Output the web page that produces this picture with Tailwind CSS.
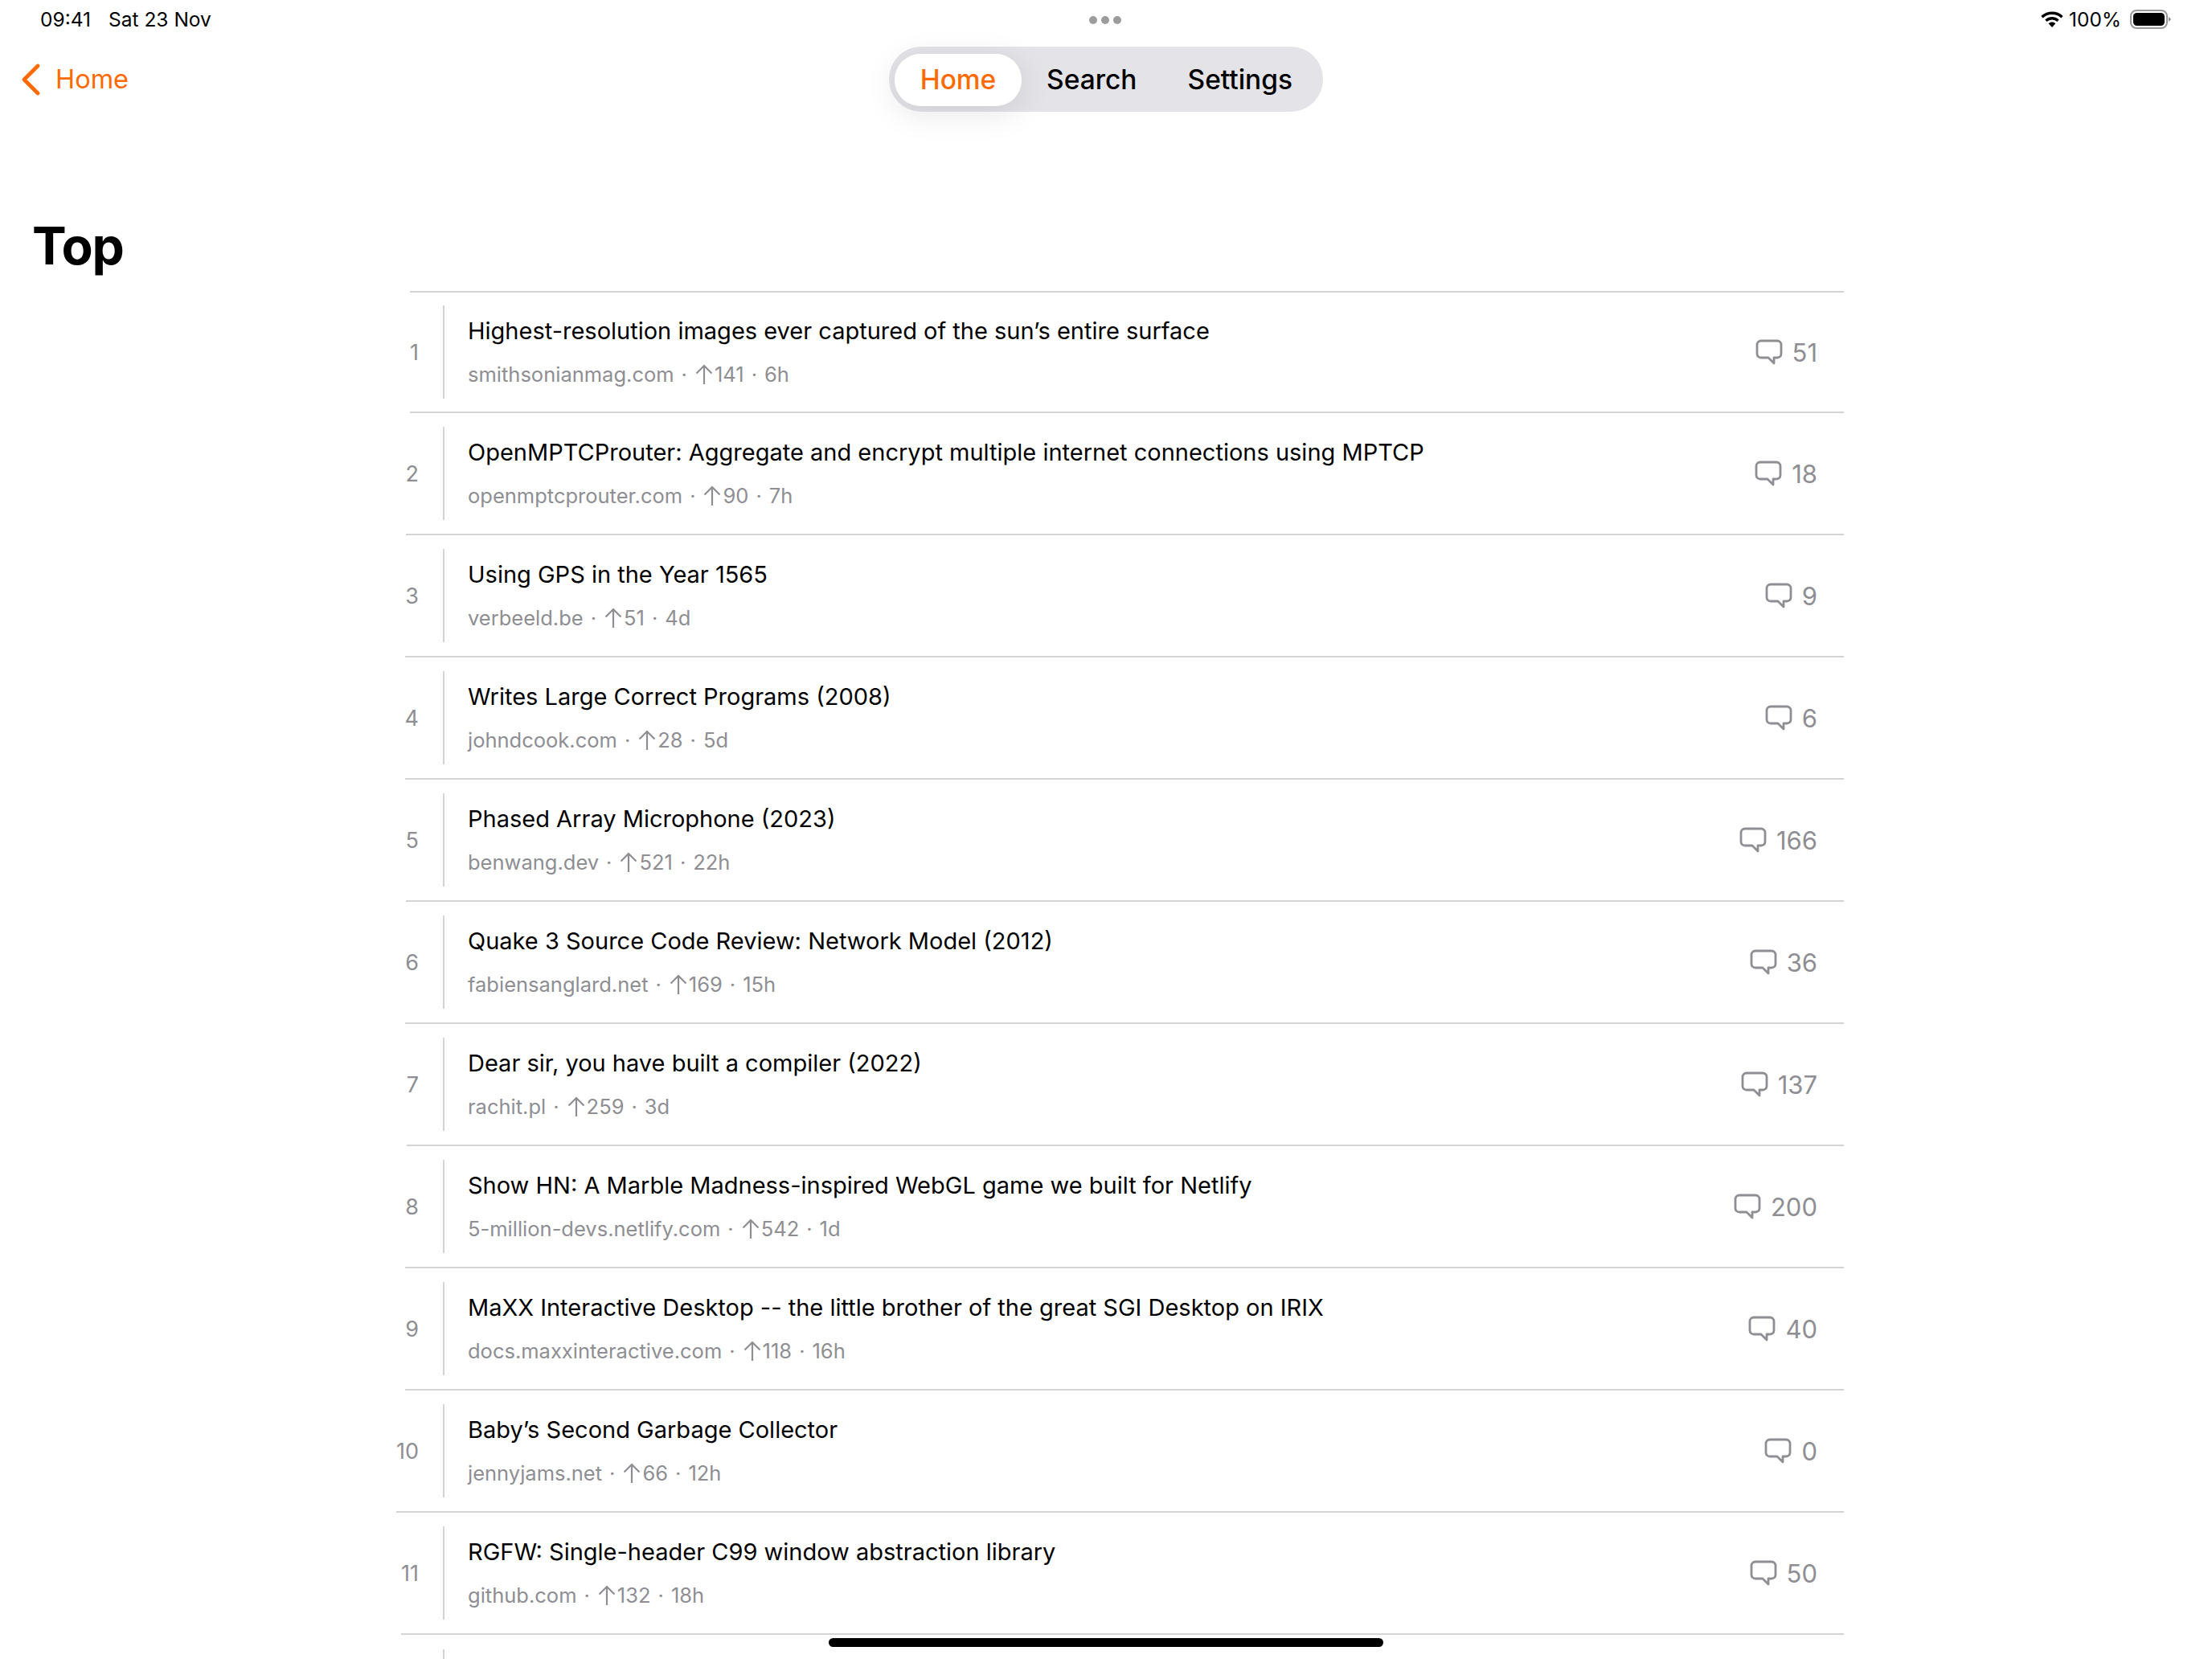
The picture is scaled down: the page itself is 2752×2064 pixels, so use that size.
<!DOCTYPE html>
<html lang="en">
<head>
  <meta charset="UTF-8">
  <title>Top</title>
  <script src="https://cdn.jsdelivr.net/npm/@tailwindcss/browser@4"></script>
</head>
<body class="bg-white font-['Inter',sans-serif] text-black">
<div class="relative h-[2064px] w-[2752px] overflow-hidden">

  <!-- status bar -->
  <div class="relative flex h-[48px] items-center justify-between pl-[50px] pr-[50px] text-[24.500px] leading-none">
    <div class="flex gap-[22px]"><span>09:41</span><span>Sat 23 Nov</span></div>
    <div class="absolute left-[1355px] top-[20px] flex gap-[5px]">
      <div class="h-[10px] w-[10px] rounded-full bg-[#9c9c9c]"></div>
      <div class="h-[10px] w-[10px] rounded-full bg-[#9c9c9c]"></div>
      <div class="h-[10px] w-[10px] rounded-full bg-[#9c9c9c]"></div>
    </div>
    <div class="flex items-center gap-[7px]">
      <svg class="h-[22px] w-[28px]" viewBox="0 0 28 22" fill="none">
        <path d="M1.500 8.200C8.500 1.600 19.500 1.600 26.500 8.200" stroke="#000" stroke-width="3.400"/>
        <path d="M6.400 12.800C10.800 8.800 17.200 8.800 21.600 12.800" stroke="#000" stroke-width="3.400"/>
        <path d="M9.600 16.300L14 21L18.400 16.300C15.800 14 12.200 14 9.600 16.300Z" fill="#000"/>
      </svg>
      <span>100%</span>
      <svg class="ml-[4px] h-[24px] w-[52px]" viewBox="0 0 52 24" fill="none">
        <rect x="1" y="1" width="45" height="22" rx="7" stroke="#999" stroke-width="2"/>
        <rect x="4" y="4" width="39" height="16" rx="4.500" fill="#000"/>
        <path d="M48 9L51 12L48 15Z" fill="#888"/>
      </svg>
    </div>
  </div>

  <!-- nav -->
  <div class="relative h-[91px]">
    <div class="absolute left-[26px] top-[31px] flex items-center gap-[19px] text-[#ff6a00]">
      <svg class="h-[40px] w-[24px]" viewBox="0 0 24 40" fill="none"><path d="M21 3L4 20L21 37" stroke="#ff6a00" stroke-width="4.600" stroke-linecap="round" stroke-linejoin="round"/></svg>
      <span class="text-[32.500px] leading-none">Home</span>
    </div>
    <div class="absolute left-[1106px] top-[10px] flex h-[81px] w-[540px] items-center rounded-[40px] bg-[#e4e4e8] pl-[7px] pt-[1px] text-[33.500px] font-medium">
      <div class="flex h-[65px] w-[158px] items-center justify-center rounded-[32px] bg-white text-[#ff6a00] shadow-[0_8px_40px_rgba(0,0,0,0.10)]">Home</div>
      <div class="ml-[31px]">Search</div>
      <div class="ml-[63px]">Settings</div>
    </div>
  </div>

  <h1 class="mt-[128px] pl-[40px] text-[64px] font-bold leading-[78px] tracking-[-1.200px]">Top</h1>

  <div id="list" class="mr-[458px] mt-[17px] flex flex-col items-end"></div>

  <!-- home indicator -->
  <div class="absolute bottom-[15px] left-[1031px] h-[11px] w-[690px] rounded-full bg-black"></div>
</div>

<script>
  const stories = [
    ['Highest-resolution images ever captured of the sun’s entire surface', 'smithsonianmag.com', '141', '6h', '51'],
    ['OpenMPTCProuter: Aggregate and encrypt multiple internet connections using MPTCP', 'openmptcprouter.com', '90', '7h', '18'],
    ['Using GPS in the Year 1565', 'verbeeld.be', '51', '4d', '9'],
    ['Writes Large Correct Programs (2008)', 'johndcook.com', '28', '5d', '6'],
    ['Phased Array Microphone (2023)', 'benwang.dev', '521', '22h', '166'],
    ['Quake 3 Source Code Review: Network Model (2012)', 'fabiensanglard.net', '169', '15h', '36'],
    ['Dear sir, you have built a compiler (2022)', 'rachit.pl', '259', '3d', '137'],
    ['Show HN: A Marble Madness-inspired WebGL game we built for Netlify', '5-million-devs.netlify.com', '542', '1d', '200'],
    ['MaXX Interactive Desktop -- the little brother of the great SGI Desktop on IRIX', 'docs.maxxinteractive.com', '118', '16h', '40'],
    ['Baby’s Second Garbage Collector', 'jennyjams.net', '66', '12h', '0'],
    ['RGFW: Single-header C99 window abstraction library', 'github.com', '132', '18h', '50']
  ];

  const list = document.getElementById('list');
  list.innerHTML = stories.map((s, i) => `
    <div class="flex h-[152px] items-center border-b-2 border-[#d4d4d6] ${i === 0 ? 'border-t-2' : ''}">
      <div class="text-[27px] leading-none text-[#8e8e93]">${i + 1}</div>
      <div class="ml-[30px] flex h-[116px] w-[1743px] items-center justify-between border-l-2 border-[#d4d4d6] pl-[29px] pr-[33px]">
        <div>
          <div class="text-[29px] leading-[36px]">${s[0]}</div>
          <div class="mt-[20px] flex items-center text-[25.500px] leading-[32px] text-[#8e8e93]">
            <span>${s[1]}</span><span class="mx-[9px]">·</span>
            <svg class="mr-[1px] h-[26px] w-[24px]" viewBox="0 0 24 26" fill="none"><path d="M12 25V2M2.500 11.500L12 2L21.500 11.500" stroke="#8e8e93" stroke-width="2.200"/></svg>
            <span>${s[2]}</span><span class="mx-[9px]">·</span><span>${s[3]}</span>
          </div>
        </div>
        <div class="flex items-center gap-[12px] text-[31px] leading-none text-[#8e8e93]">
          <svg class="h-[32px] w-[34px]" viewBox="0 0 34 32" fill="none"><path d="M7 2H27C30 2 32 4 32 7V18C32 21 30 23 27 23H23L23 30L16 23H7C4 23 2 21 2 18V7C2 4 4 2 7 2Z" stroke="#8e8e93" stroke-width="2.800" stroke-linejoin="round"/></svg>
          <span>${s[4]}</span>
        </div>
      </div>
    </div>`).join('') + `
    <div class="w-[1743px] pt-[18px]"><div class="h-[60px] border-l-2 border-[#d4d4d6]"></div></div>`;
</script>
</body>
</html>
